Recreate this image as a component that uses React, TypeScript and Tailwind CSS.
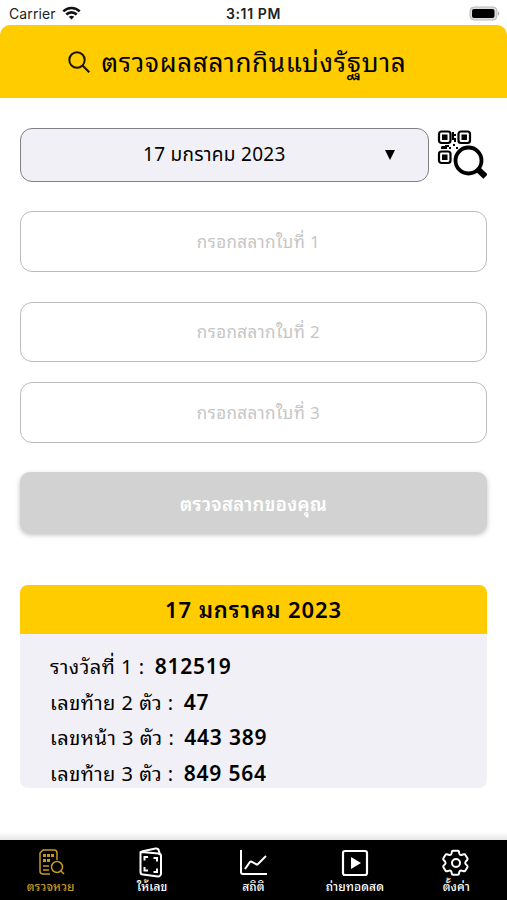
import type { ReactNode } from "react";

const tickets = [
  { label: "กรอกสลากใบที่ 1", gap: "mt-[29.5px]" },
  { label: "กรอกสลากใบที่ 2", gap: "mt-[30px]" },
  { label: "กรอกสลากใบที่ 3", gap: "mt-5" },
];

const results = [
  { label: "รางวัลที่ 1 :", value: "812519" },
  { label: "เลขท้าย 2 ตัว :", value: "47" },
  { label: "เลขหน้า 3 ตัว :", value: "443 389" },
  { label: "เลขท้าย 3 ตัว :", value: "849 564" },
];

function StatusBar() {
  return (
    <div className="grid h-[25px] shrink-0 grid-cols-3 items-center px-[9px] pt-[2px] font-['Inter','Liberation_Sans',sans-serif] text-[14px] text-[#222]">
      <div className="flex items-center gap-[6px]">
        <span className="tracking-[0.1px]">Carrier</span>
        <svg className="-mt-[2px]" width="19" height="14" viewBox="0 0 19 14" fill="none" stroke="#111" strokeWidth="2.6">
          <path d="M1.3 5.4C5.8.8 13.2.8 17.7 5.4" />
          <path d="M4.3 8.5c2.9-2.9 7.5-2.9 10.4 0" />
          <path d="M9.5 13.5 6.8 10.8c1.5-1.4 3.9-1.4 5.4 0z" fill="#111" stroke="none" />
        </svg>
      </div>
      <span className="text-center font-semibold tracking-[0.6px] whitespace-nowrap">3:11 PM</span>
      <svg className="-mr-[2px] justify-self-end" width="31" height="15" viewBox="0 0 31 15">
        <rect x="1" y="1" width="27" height="13" rx="4" fill="#ddd" stroke="#bbb" />
        <rect x="3" y="3" width="22.5" height="9" rx="2" fill="#000" />
        <path d="M29 5.5c1.8.6 1.8 3.4 0 4z" fill="#aaa" />
      </svg>
    </div>
  );
}

function QrSearchIcon() {
  return (
    <svg width="50" height="52" viewBox="0 -1 50 52" fill="none" stroke="#000">
      <g strokeWidth="2.2">
        <rect x="2" y="2.5" width="11.5" height="11.5" rx="2.5" />
        <rect x="21.5" y="2.5" width="11.5" height="11.5" rx="2.5" />
        <rect x="2" y="22.5" width="11.5" height="11.5" rx="2.5" />
      </g>
      <g fill="#000" stroke="none">
        <rect x="5" y="5.5" width="5.5" height="5.5" />
        <rect x="24.5" y="5.5" width="5.5" height="5.5" />
        <rect x="5" y="25.5" width="5.5" height="5.5" />
        <path d="M15 3h2v2h2v2h-2v2h2v4h-2v-2h-2zM5 17h3v-1h4v2h-2v2H4v-2zM12 18h2v2h-2zM16 15h2v2h-2zM19 18h2v2h-2z" />
      </g>
      <circle cx="31.5" cy="31.5" r="13" fill="#fff" strokeWidth="3.8" />
      <path d="m40.5 40 8 7.5" strokeWidth="6" />
    </svg>
  );
}

function Tab({ label, active, children }: { label: string; active?: boolean; children: ReactNode }) {
  return (
    <div className={active ? "flex flex-1 flex-col items-center text-[#c59a20]" : "flex flex-1 flex-col items-center text-white"}>
      <svg width="30" height="32" viewBox="0 0 30 32" fill="none" stroke="currentColor">
        {children}
      </svg>
      <span className="text-[12px] leading-[15px] font-medium tracking-[0.1px] whitespace-nowrap">{label}</span>
    </div>
  );
}

export default function App() {
  return (
    <div className="flex h-[900px] w-[507px] flex-col overflow-hidden bg-white font-['Noto_Sans','Noto_Sans_Thai_Looped','Noto_Sans_Thai',sans-serif] text-black">
      <StatusBar />
      <header className="flex h-[73px] shrink-0 items-center justify-center gap-[11px] rounded-t-[10px] bg-[#ffcc00] pr-[33px]">
        <svg className="mt-[2px]" width="23" height="23" viewBox="0 0 23 23" fill="none" stroke="#1a1500" strokeWidth="2">
          <circle cx="9" cy="9" r="7.7" />
          <path d="m14.5 14.5 6.8 6.8" />
        </svg>
        <h1 className="text-[26px] leading-[40px] tracking-[0.7px] whitespace-nowrap">ตรวจผลสลากกินแบ่งรัฐบาล</h1>
      </header>

      <main className="flex flex-1 flex-col px-5 pt-[29.5px]">
        <div className="flex h-[54px] shrink-0 gap-2">
          <button className="flex w-[409px] items-center justify-between rounded-[12px] border border-[#808080] bg-[#f1f0f6] pr-[33px] pl-[122px] font-['Noto_Sans','Noto_Sans_Thai',sans-serif] text-[19px] tracking-[0.3px]">
            <span>17 มกราคม 2023</span>
            <svg width="10" height="10" viewBox="0 0 10 10">
              <path d="M0 0h10L5 10z" />
            </svg>
          </button>
          <QrSearchIcon />
        </div>

        {tickets.map((t) => (
          <div key={t.label} className={`${t.gap} flex h-[60.5px] shrink-0 items-center justify-center rounded-[12px] border border-[#bcbcbc] pl-[10px] text-[17px] tracking-[0.4px] text-[#c6c6c6]`}>
            {t.label}
          </div>
        ))}

        <button className="mt-[29.5px] h-[61px] shrink-0 rounded-[10px] bg-[#d2d2d2] pt-[2px] text-[18.5px] font-semibold tracking-[0.3px] text-white shadow-[0_2px_5px_rgba(0,0,0,0.25)]">
          ตรวจสลากของคุณ
        </button>

        <section className="mt-[51.5px] h-[203px] shrink-0 overflow-hidden rounded-[8px] bg-[#f1f0f6]">
          <h2 className="flex h-[49px] items-center justify-center bg-[#ffcc00] pt-px text-[22px] font-semibold tracking-[0.9px]">17 มกราคม 2023</h2>
          <div className="pt-[15.5px] pl-[30px] text-[20px] leading-[35.5px] tracking-[0.5px]">
            {results.map((r) => (
              <div key={r.label} className="flex gap-[10px]">
                <span>{r.label}</span>
                <span className="text-[21px] font-semibold tracking-[0.8px]">{r.value}</span>
              </div>
            ))}
          </div>
        </section>
      </main>

      <div className="h-[8px] shrink-0 bg-linear-to-b from-white to-[#e6e6e6]" />
      <nav className="flex h-[60px] shrink-0 bg-black pt-[7px]">
        <Tab label="ตรวจหวย" active>
          <path d="M14 27H7a3 3 0 0 1-3-3V6l3-3h11a3 3 0 0 1 3 3v7" strokeWidth="1.5" />
          <path d="M7 8.5h3m1 0h3m1 0h3M7 13.5h3m1 0h3" strokeWidth="3" />
          <path d="M7 19h6m-6 4h6" strokeWidth="1.4" />
          <circle cx="21" cy="20" r="5.5" strokeWidth="1.5" />
          <path d="m25 24 3 3" strokeWidth="1.5" />
        </Tab>
        <Tab label="ให้เลข">
          <path d="M4.5 5 21.5 6.5a2.500 2.500 0 0 1 2.500 2.500V26.500a3 3 0 0 1-3 3L6 27.500a2.500 2.500 0 0 1-2.500-2.500V5z" strokeWidth="2" strokeLinejoin="round" />
          <path d="m4.500 4.500 14-3q3-.5 3.500 2.500l.8 4" strokeWidth="2" />
          <path d="M7.500 13.500V10H11M16.500 11H20v3.500M7.500 20v3.500H11M16.500 25H20v-3.500" strokeWidth="2" />
        </Tab>
        <Tab label="สถิติ">
          <path d="M2 3v22q0 2 2 2h24" strokeWidth="2" />
          <path d="m6 22 5-7q1-1 2 0l4 2q1 1 2 0l8-8" strokeWidth="2" />
        </Tab>
        <Tab label="ถ่ายทอดสด">
          <rect x="3" y="4" width="24" height="24" rx="2" strokeWidth="2.2" />
          <path d="m11 10 10 6-10 6z" fill="currentColor" stroke="none" />
        </Tab>
        <Tab label="ตั้งค่า">
          <path
            d="M12.5 4h5q1 0 1 1l.5 2q.5 1.500 2 1.200l2.500-.7q1-.2 1.500.7l2 3.300q.5 1-.2 1.700l-1.500 1.500q-1 1.300 0 2.600l1.500 1.500q.7.7.2 1.700l-2 3.300q-.5.9-1.500.7l-2.500-.7q-1.500-.3-2 1.200l-.5 2q0 1-1 1h-5q-1 0-1-1l-.5-2q-.5-1.500-2-1.200l-2.500.7q-1 .2-1.500-.7l-2-3.300q-.5-1 .2-1.700l1.500-1.500q1-1.300 0-2.600l-1.500-1.500q-.7-.7-.2-1.700l2-3.300q.5-.9 1.500-.7l2.500.7q1.500.3 2-1.200l.5-2q0-1 1-1z"
            transform="translate(-.6 -.2)"
            strokeWidth="2"
            strokeLinejoin="round"
          />
          <circle cx="15" cy="16" r="4" strokeWidth="2" />
        </Tab>
      </nav>
    </div>
  );
}
